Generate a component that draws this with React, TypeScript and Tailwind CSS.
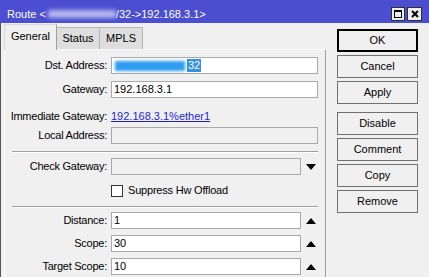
import React from 'react';

const Field: React.FC<{ w: 'long' | 'short'; disabled?: boolean; children?: React.ReactNode }> = ({ w, disabled, children }) => (
  <div
    className={
      (w === 'long' ? 'w-[207px] ' : 'w-[190px] ') +
      (disabled ? 'bg-[#f0f0f0] ' : 'bg-white ') +
      'ml-[4px] h-[17px] border border-[#a9a9a9] flex items-center pl-[2px] whitespace-nowrap overflow-hidden'
    }
  >
    {children}
  </div>
);

const Label: React.FC<{ text: string }> = ({ text }) => (
  <div className="w-[102px] text-right tracking-[-0.25px] whitespace-nowrap">{text}</div>
);

const Arrow: React.FC<{ up?: boolean }> = ({ up }) => (
  <svg width="10" height="6" viewBox="0 0 10 6" className="ml-[5px]">
    {up ? <polygon points="0,6 10,6 5,0" fill="#000" /> : <polygon points="0,0 10,0 5,6" fill="#000" />}
  </svg>
);

const Separator: React.FC = () => (
  <div className="ml-[7px] w-[306px] border-t border-[#a0a0a0] border-b border-b-white" />
);

const Button: React.FC<{ label: string; primary?: boolean; className?: string }> = ({ label, primary, className }) => (
  <div
    className={
      (primary ? 'border-2 border-black ' : 'border border-[#707070] ') +
      'w-[81px] h-[23px] bg-[#f0f0f0] flex items-center justify-center ' +
      (className || '')
    }
  >
    {label}
  </div>
);

export default function App() {
  return (
    <div className="w-[429px] h-[277px] overflow-hidden bg-[#f0f0f0] font-['Liberation_Sans',Arial,sans-serif] text-[11px] text-black flex flex-col">
      {/* title bar */}
      <div className="h-[23px] shrink-0 bg-[#4b4fcf] flex items-start pl-[7px] pr-[7px] text-white leading-[13px]">
        <span className="pt-[8px] whitespace-nowrap">Route &lt;</span>
        <span className="mt-[10px] ml-[2px] inline-block w-[68px] h-[8px] bg-[#b4b7ee] blur-[2px]" />
        <span className="pt-[8px] whitespace-nowrap">/32-&gt;192.168.3.1&gt;</span>
        <div className="ml-auto mt-[7px] flex gap-[2px]">
          <div className="w-[14px] h-[14px] bg-[#ececec] border border-[#303030] flex items-center justify-center">
            <div className="w-[8px] h-[8px] border border-black border-t-2" />
          </div>
          <div className="w-[15px] h-[14px] bg-[#ececec] border border-[#303030] flex items-center justify-center">
            <svg width="8" height="8" viewBox="0 0 8 8">
              <path d="M1 1 L7 7 M7 1 L1 7" stroke="#000" strokeWidth="2" />
            </svg>
          </div>
        </div>
      </div>

      {/* body */}
      <div className="flex flex-1 min-h-0 border-l border-[#555]">
        <div className="ml-[3px] w-[322px] flex flex-col pt-[1px]">
          {/* tabs */}
          <div className="flex items-end h-[25px]">
            <div className="relative z-10 -mb-[1px] w-[53px] h-[26px] bg-[#f0f0f0] border-t border-l border-[#d9d9d9] border-r border-r-[#a0a0a0] flex items-center justify-center pb-[2px]">
              General
            </div>
            <div className="w-[43px] h-[22px] bg-[#dedede] border-t border-r border-[#b4b4b4] flex items-center justify-center">
              Status
            </div>
            <div className="w-[43px] h-[22px] bg-[#dedede] border-t border-r border-[#b4b4b4] flex items-center justify-center">
              MPLS
            </div>
          </div>

          {/* panel */}
          <div className="flex-1 border-t border-l border-[#fafafa] border-r border-r-[#a0a0a0] flex flex-col">
            <div className="mt-[7px] h-[17px] flex items-center">
              <Label text="Dst. Address:" />
              <Field w="long">
                <span className="ml-[1px] inline-block w-[70px] h-[10px] bg-[#2e9cf0] blur-[1.5px]" />
                <span className="ml-[2px] px-[1px] leading-[13px] bg-[#3390e8] text-white">32</span>
              </Field>
            </div>
            <div className="mt-[7px] h-[17px] flex items-center">
              <Label text="Gateway:" />
              <Field w="long">192.168.3.1</Field>
            </div>
            <div className="mt-[10px] h-[17px] flex items-center">
              <Label text="Immediate Gateway:" />
              <span className="ml-[4px] text-[#1f1fe0] underline">192.168.3.1%ether1</span>
            </div>
            <div className="mt-[2px] h-[17px] flex items-center">
              <Label text="Local Address:" />
              <Field w="long" disabled />
            </div>
            <div className="mt-[7px]">
              <Separator />
            </div>
            <div className="mt-[5px] h-[17px] flex items-center">
              <Label text="Check Gateway:" />
              <Field w="short" disabled />
              <Arrow />
            </div>
            <div className="mt-[7px] h-[17px] flex items-center">
              <div className="ml-[106px] w-[12px] h-[12px] border border-[#333] bg-white" />
              <span className="ml-[5px] tracking-[-0.2px]">Suppress Hw Offload</span>
            </div>
            <div className="mt-[7px]">
              <Separator />
            </div>
            <div className="mt-[4px] h-[17px] flex items-center">
              <Label text="Distance:" />
              <Field w="short">1</Field>
              <Arrow up />
            </div>
            <div className="mt-[6px] h-[17px] flex items-center">
              <Label text="Scope:" />
              <Field w="short">30</Field>
              <Arrow up />
            </div>
            <div className="mt-[6px] h-[17px] flex items-center">
              <Label text="Target Scope:" />
              <Field w="short">10</Field>
              <Arrow up />
            </div>
          </div>
        </div>

        {/* buttons */}
        <div className="ml-[11px] pt-[6px] flex flex-col gap-[3px]">
          <Button label="OK" primary />
          <Button label="Cancel" />
          <Button label="Apply" />
          <Button label="Disable" className="mt-[5px]" />
          <Button label="Comment" />
          <Button label="Copy" />
          <Button label="Remove" />
        </div>
      </div>
    </div>
  );
}
